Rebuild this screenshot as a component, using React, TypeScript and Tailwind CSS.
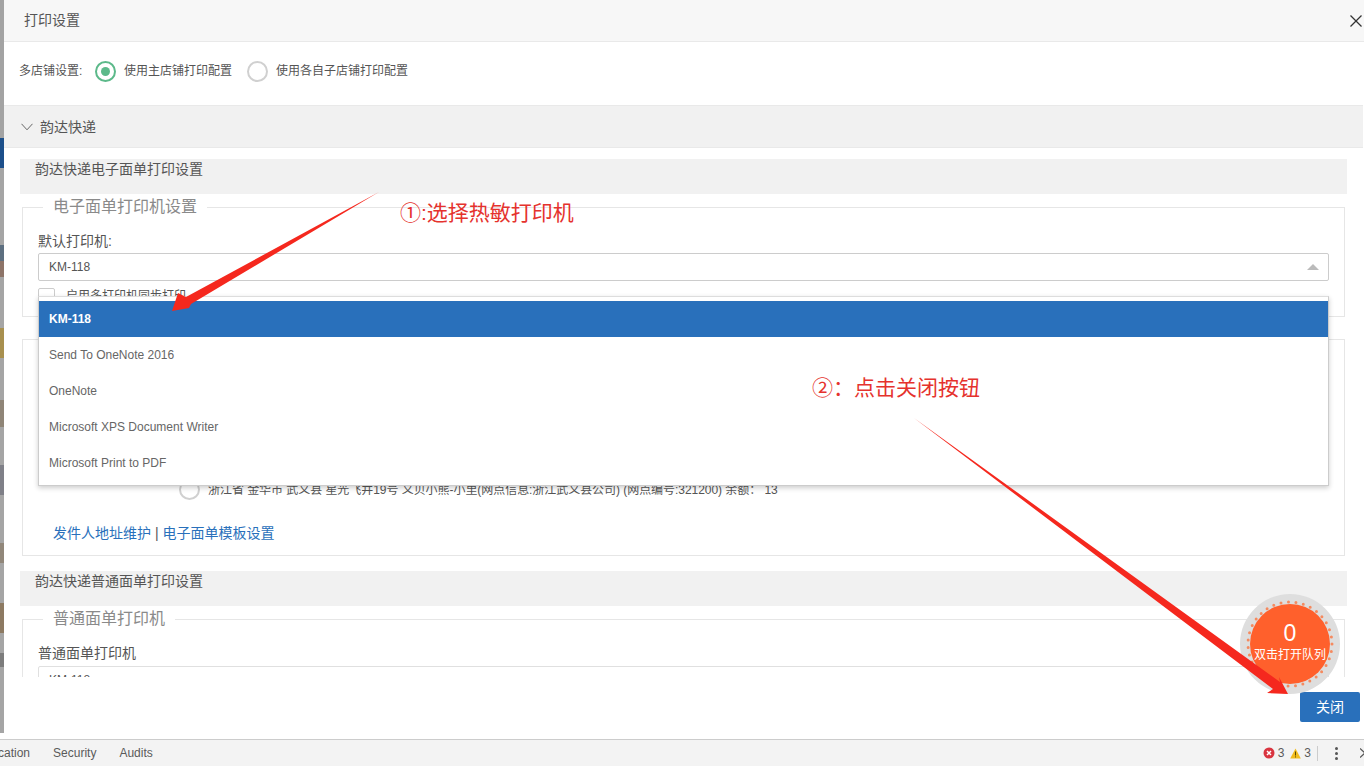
const printers = [
  "KM-118",
  "Send To OneNote 2016",
  "OneNote",
  "Microsoft XPS Document Writer",
  "Microsoft Print to PDF",
];

// what shows of the page behind the modal
const backdropBands = [
  "h-[138px] bg-[#a3a3a3]",
  "h-[30px] bg-[#1c4f8a]",
  "h-[77px] bg-[#a5a5a5]",
  "h-[16px] bg-[#5d6f80]",
  "h-[16px] bg-[#8d7468]",
  "h-[51px] bg-[#a5a5a5]",
  "h-[30px] bg-[#a8904f]",
  "h-[42px] bg-[#a5a5a5]",
  "h-[27px] bg-[#8f8577]",
  "h-[38px] bg-[#a5a5a5]",
  "h-[30px] bg-[#7f8088]",
  "h-[48px] bg-[#a5a5a5]",
  "h-[20px] bg-[#91877a]",
  "h-[40px] bg-[#a5a5a5]",
  "h-[30px] bg-[#8d7a62]",
  "h-[20px] bg-[#a5a5a5]",
  "h-[14px] bg-[#7c7c7c]",
  "h-[66px] bg-[#a5a5a5]",
];

function Radio({ checked, label }: { checked?: boolean; label: string }) {
  return (
    <div className="flex items-center gap-2">
      <span
        className={`w-[21px] h-[21px] rounded-full border-2 flex items-center justify-center ${
          checked ? "border-[#5cb98a]" : "border-[#d0d0d0]"
        }`}
      >
        {checked && <span className="w-[9px] h-[9px] rounded-full bg-[#5cb98a]" />}
      </span>
      <span className="text-xs text-[#555]">{label}</span>
    </div>
  );
}

function SectionHead({ title }: { title: string }) {
  return (
    <div className="h-[35px] ml-[16px] mr-[17px] bg-[#f1f1f1] pl-[15px] text-sm leading-5 text-[#555]">
      {title}
    </div>
  );
}

function Legend({ title }: { title: string }) {
  return (
    <legend className="ml-[5px] px-[10px] text-base leading-5 text-[#8a8a8a]">
      {title}
    </legend>
  );
}

export default function App() {
  return (
    <div className="relative w-screen h-screen overflow-hidden bg-white flex flex-col font-['Liberation_Sans','Noto_Sans_CJK_SC',sans-serif]">
      <div className="flex h-[739px]">
        {/* Page behind the modal */}
        <div className="w-[4px] h-[733px] shrink-0 flex flex-col overflow-hidden">
          {backdropBands.map((band, i) => (
            <div key={i} className={band} />
          ))}
        </div>

        {/* Modal */}
        <div className="flex-1 min-w-0 flex flex-col bg-white">
          <div className="h-[42px] shrink-0 bg-[#f7f7f7] border-b border-[#e9e9e9] flex items-center justify-between pl-[20px] pr-[2px]">
            <span className="-mt-[2px] text-sm text-[#555]">打印设置</span>
            <svg width="12" height="12" viewBox="0 0 12 12" stroke="#333" strokeWidth="1.3" fill="none">
              <line x1="0.5" y1="0.5" x2="11.5" y2="11.5" />
              <line x1="11.5" y1="0.5" x2="0.5" y2="11.5" />
            </svg>
          </div>

          <div className="h-[635px] shrink-0 overflow-hidden">
            <div className="h-[63px] flex items-center pl-[15px] pb-[5px] text-xs text-[#555]">
              <span className="w-[76px]">多店铺设置:</span>
              <Radio checked label="使用主店铺打印配置" />
              <div className="w-[15px]" />
              <Radio label="使用各自子店铺打印配置" />
            </div>

            <div className="h-[43px] mr-[1px] bg-[#f1f1f1] border-y border-[#e9e9e9] flex items-center pl-[17px] gap-[7px]">
              <svg width="12" height="8" viewBox="0 0 12 8" stroke="#666" strokeWidth="1" fill="none">
                <path d="M0.5 0.8 L6 6.8 L11.5 0.8" />
              </svg>
              <span className="text-sm text-[#555]">韵达快递</span>
            </div>

            <div className="mt-[11px]">
              <SectionHead title="韵达快递电子面单打印设置" />
            </div>

            <fieldset className="h-[120px] ml-[18px] mr-[19px] mt-[3px] px-[15px] border border-[#e6e6e6]">
              <Legend title="电子面单打印机设置" />
              <div className="mt-[16px] text-sm leading-4 text-[#555]">默认打印机:</div>
              <div className="relative mt-[4px]">
                <div className="h-[28px] border border-[#ccc] rounded-[2px] flex items-center justify-between pl-[10px] pr-[9px]">
                  <span className="text-xs text-[#555]">KM-118</span>
                  <span className="w-0 h-0 border-x-[6px] border-x-transparent border-b-[6px] border-b-[#bbb]" />
                </div>
                <div className="mt-[7px] flex items-start gap-[11px]">
                  <span className="w-[17px] h-[17px] border border-[#ccc] rounded-[2px]" />
                  <span className="text-xs text-[#555]">启用多打印机同步打印</span>
                </div>

                {/* Open select list */}
                <ul className="absolute z-10 top-[43px] left-0 right-0 py-[4px] bg-white border border-[#ccc] border-t-[#ddd] shadow-[0_2px_5px_rgba(0,0,0,0.2)] text-xs text-[#666]">
                  {printers.map((name, i) => (
                    <li
                      key={name}
                      className={`h-[36px] flex items-center pl-[10px] ${
                        i === 0 ? "bg-[#2970bb] text-white font-bold" : ""
                      }`}
                    >
                      {name}
                    </li>
                  ))}
                </ul>
              </div>
            </fieldset>

            <div className="h-[217px] ml-[18px] mr-[19px] mt-[22px] border border-[#e6e6e6] flex flex-col justify-end pb-[12px]">
              <div className="ml-[156px] flex items-center gap-[8px]">
                <span className="w-[21px] h-[21px] rounded-full border-2 border-[#d0d0d0]" />
                <span className="text-xs tracking-[-0.05px] text-[#555]">
                  浙江省 金华市 武义县 星光飞井19号 义贝小熊-小里(网点信息:浙江武义县公司) (网点编号:321200) 余额： 13
                </span>
              </div>
              <div className="ml-[30px] mt-[23px] text-sm leading-5 text-[#2970bb]">
                发件人地址维护 <span className="text-[#555]">|</span> 电子面单模板设置
              </div>
            </div>

            <div className="mt-[15px]">
              <SectionHead title="韵达快递普通面单打印设置" />
            </div>

            <fieldset className="h-[120px] ml-[18px] mr-[19px] mt-[3px] px-[15px] border border-[#e6e6e6]">
              <Legend title="普通面单打印机" />
              <div className="mt-[16px] text-sm leading-4 text-[#555]">普通面单打印机</div>
              <div className="mt-[5px] h-[28px] border border-[#e0e0e0] rounded-[2px] flex items-center pl-[10px]">
                <span className="text-xs text-[#555]">KM-118</span>
              </div>
            </fieldset>
          </div>

          <div className="flex-1 flex justify-end items-start pt-[15px] pr-[4px]">
            <button className="w-[60px] h-[30px] rounded-[2px] bg-[#2970bb] text-sm text-white">
              关闭
            </button>
          </div>
        </div>
      </div>

      {/* DevTools drawer */}
      <div className="h-[27px] shrink-0 bg-[#f3f3f3] border-t border-[#ccc] flex items-center text-xs text-[#5a5a5a]">
        <span className="-ml-[2px]">cation</span>
        <span className="ml-[23px]">Security</span>
        <span className="ml-[23px]">Audits</span>
        <div className="ml-auto flex items-center">
          <svg width="12" height="12" viewBox="0 0 12 12">
            <circle cx="6" cy="6" r="5.5" fill="#d9343f" />
            <path d="M4 4 L8 8 M8 4 L4 8" stroke="#fff" strokeWidth="1.5" />
          </svg>
          <span className="ml-[3px]">3</span>
          <svg className="ml-[6px]" width="11" height="11" viewBox="0 0 11 11">
            <path d="M5.5 0.5 L10.8 10.5 L0.2 10.5 Z" fill="#f2bd1d" />
            <rect x="5" y="3.5" width="1" height="4" fill="#5a4a00" />
            <rect x="5" y="8.4" width="1" height="1" fill="#5a4a00" />
          </svg>
          <span className="ml-[3px]">3</span>
          <span className="ml-[6px] w-px h-[15px] bg-[#ccc]" />
          <span className="ml-[17px] flex flex-col gap-[2px]">
            <span className="w-[3px] h-[3px] rounded-full bg-[#555]" />
            <span className="w-[3px] h-[3px] rounded-full bg-[#555]" />
            <span className="w-[3px] h-[3px] rounded-full bg-[#555]" />
          </span>
          <svg className="ml-[22px]" width="4" height="10" viewBox="0 0 4 10" stroke="#555" strokeWidth="1.2" fill="none">
            <path d="M0 0.5 L5 5 L0 9.5" />
          </svg>
        </div>
      </div>

      {/* Print queue bubble */}
      <div className="absolute z-20 left-[1240px] top-[594px] w-[100px] h-[100px] rounded-full bg-[#dedede] flex items-center justify-center">
        <svg className="absolute inset-0" width="100" height="100" viewBox="0 0 100 100" fill="none">
          <circle cx="50" cy="50" r="42" stroke="#f58a5f" strokeWidth="3" strokeLinecap="round" strokeDasharray="0 7.54" />
        </svg>
        <div className="relative w-[80px] h-[80px] rounded-full bg-[#ff602c] flex flex-col items-center text-white">
          <span className="mt-[16px] text-[23px] leading-[26px] font-medium">0</span>
          <span className="mt-[1px] text-xs leading-4 whitespace-nowrap">双击打开队列</span>
        </div>
      </div>

      {/* Screenshot annotations */}
      <span className="absolute z-30 left-[400px] top-[199px] text-[21px] leading-7 text-[#e5322d]">①:选择热敏打印机</span>
      <span className="absolute z-30 left-[812px] top-[374px] text-[21px] leading-7 text-[#e5322d]">②：点击关闭按钮</span>
      <svg className="absolute z-30 inset-0 pointer-events-none" width="1364" height="766" viewBox="0 0 1364 766">
        <polygon fill="#f5281e" points="379,192 191,304 189,308 172,311 178,293 186,297" />
        <polygon fill="#f5281e" points="914,418 1280,682 1279,677 1288,694 1267,693 1273,689" />
      </svg>
    </div>
  );
}
